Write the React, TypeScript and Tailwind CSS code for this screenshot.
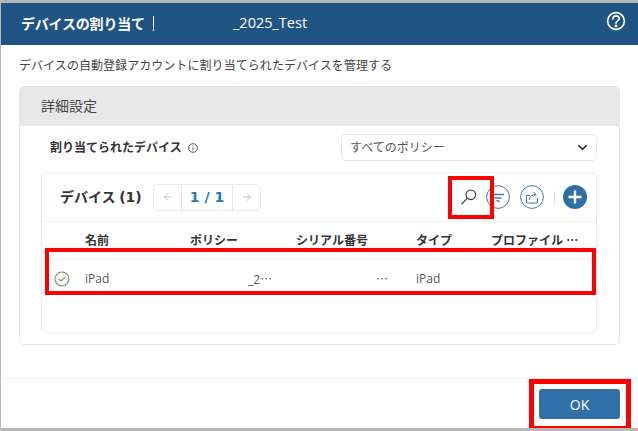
import { ArrowLeft, ArrowRight, ChevronDown } from "lucide-react";

function Dots() {
  return <span className="font-['Noto_Sans_CJK_JP']">…</span>;
}

const columns = [
  { label: "名前", width: "w-[105px]" },
  { label: "ポリシー", width: "w-[106px]" },
  { label: "シリアル番号", width: "w-[120px]" },
  { label: "タイプ", width: "w-[75px]" },
];

function HelpIcon() {
  return (
    <svg width="20" height="20" viewBox="0 0 20 20" fill="none" stroke="white" strokeWidth="1.6">
      <circle cx="10" cy="10" r="8.4" />
      <path d="M6.9 7.9c0-1.8 1.4-3 3.2-3s3.1 1.1 3.1 2.7c0 2.4-3.2 2.2-3.2 4.6" strokeLinecap="round" />
      <circle cx="10" cy="15" r="0.6" fill="white" />
    </svg>
  );
}

function InfoIcon() {
  return (
    <svg width="10" height="10" viewBox="0 0 10 10" fill="none" stroke="#444" strokeWidth="0.9">
      <circle cx="5" cy="5" r="4.3" />
      <path d="M5 4.4v3M5 2.5v1" />
    </svg>
  );
}

function SearchIcon() {
  return (
    <svg width="18" height="18" viewBox="0 0 18 18" fill="none" stroke="#333" strokeWidth="1.1">
      <circle cx="10.8" cy="6.8" r="4.8" />
      <path d="M7.2 10.4L1.8 15.8" strokeLinecap="round" />
    </svg>
  );
}

function FilterIcon() {
  return (
    <svg width="24" height="24" viewBox="0 0 24 24" fill="none" stroke="#3a78ad" strokeWidth="1">
      <circle cx="12" cy="12" r="11.4" />
      <path d="M6 9.500h12" strokeWidth="1.500" />
      <path d="M8.500 13h7" strokeWidth="1.500" />
      <path d="M10.500 16h3" strokeWidth="1.500" />
    </svg>
  );
}

function ExportIcon() {
  return (
    <svg width="24" height="24" viewBox="0 0 24 24" fill="none" stroke="#3a78ad" strokeWidth="1">
      <circle cx="12" cy="12" r="11.4" />
      <path d="M10 10.500H6.500v7.500h11v-5" />
      <path d="M9.500 15c0-3.500 2.500-5.500 6-5.500M13.500 7l2.500 2.500-2.500 2.200" />
    </svg>
  );
}

function PlusIcon() {
  return (
    <svg width="24" height="24" viewBox="0 0 24 24">
      <circle cx="12" cy="12" r="12" fill="#2f6fa6" />
      <path d="M12 5.500v13M5.500 12h13" stroke="white" strokeWidth="2.400" />
    </svg>
  );
}

function CheckIcon() {
  return (
    <svg width="16" height="16" viewBox="0 0 16 16" fill="none" stroke="#5f9a58" strokeWidth="1.100">
      <circle cx="8" cy="8" r="7" />
      <path d="M4.800 8l2.200 2 4.200-3.800" />
    </svg>
  );
}

export default function App() {
  return (
    <div
      className="relative flex h-[431px] w-[638px] flex-col overflow-hidden border-t-[3px] border-b-[3px] border-l border-[#b8b8b8] bg-white text-[#333]"
      style={{ fontFamily: '"Open Sans", "Noto Sans CJK JP", sans-serif' }}
    >
      {/* Title bar */}
      <div className="flex h-[42px] shrink-0 items-center bg-[#1f5484] pb-[2px] pl-5 pr-[12px] text-white">
        <span className="w-[132px] whitespace-nowrap text-[14px] font-bold tracking-[-0.2px]">デバイスの割り当て</span>
        <span className="h-[15px] w-px bg-white" />
        <span className="ml-[79px] text-[14.5px]">_2025_Test</span>
        <span className="mb-[4px] ml-auto flex">
          <HelpIcon />
        </span>
      </div>

      <div className="flex-1 px-[18px] pt-[11px]">
        <p className="h-[19px] text-[12px] leading-[19px] tracking-[0.06px] text-[#444]">
          デバイスの自動登録アカウントに割り当てられたデバイスを管理する
        </p>

        {/* Settings card */}
        <div className="mt-[11px] h-[259px] w-[601px] overflow-hidden rounded-[5px] border border-[#e6e6e6]">
          <div className="-mx-px -mt-px flex h-[40px] items-center bg-[#e8e8e8] pb-[2px] pl-[22px] text-[14px] text-[#444]">
            詳細設定
          </div>

          <div className="pl-[21px] pr-[22px]">
            <div className="mt-[8px] flex h-[27px] items-center pl-[9px]">
              <span className="text-[12px] font-bold">割り当てられたデバイス</span>
              <span className="ml-[6px] flex">
                <InfoIcon />
              </span>
              <div className="ml-auto flex h-[27px] w-[256px] items-center justify-between rounded-[5px] border border-[#e6e6e6] pl-[8px] pr-[6px] text-[12px] text-[#555]">
                <span>すべてのポリシー</span>
                <ChevronDown size={15} strokeWidth={2.5} color="#333" />
              </div>
            </div>

            {/* Devices table */}
            <div className="mt-[11px] h-[161px] rounded-[5px] border border-[#ececec]">
              <div className="flex h-[49px] items-center border-b border-[#f0f0f0] pl-[18px] pr-[9px]">
                <span className="w-[93px] whitespace-nowrap text-[14px] font-bold">
                  デバイス <span className="font-['DejaVu_Sans']">(1)</span>
                </span>
                <div className="flex h-[27px] w-[108px] items-center rounded-[5px] border border-[#e8e8e8] text-[#c4c4c4]">
                  <span className="flex h-full w-[28px] items-center justify-center border-r border-[#e8e8e8]">
                    <ArrowLeft size={12} />
                  </span>
                  <span className="flex h-full w-[51px] items-center justify-center border-r border-[#e8e8e8] font-['DejaVu_Sans'] text-[14px] font-bold text-[#1f7ab0]">
                    1 / 1
                  </span>
                  <span className="flex flex-1 items-center justify-center">
                    <ArrowRight size={12} />
                  </span>
                </div>
                <div className="ml-auto flex items-center">
                  <SearchIcon />
                  <span className="ml-[8px] flex">
                    <FilterIcon />
                  </span>
                  <span className="ml-[10px] flex">
                    <ExportIcon />
                  </span>
                  <span className="ml-[10px] h-[13px] w-px bg-[#ddd]" />
                  <span className="ml-[8px] flex">
                    <PlusIcon />
                  </span>
                </div>
              </div>

              <div className="flex h-[38px] items-center border-b border-[#ececec] pl-[43px] text-[12px] font-bold">
                {columns.map((c) => (
                  <span key={c.label} className={`${c.width} whitespace-nowrap`}>
                    {c.label}
                  </span>
                ))}
                <span className="whitespace-nowrap">
                  プロファイル <Dots />
                </span>
              </div>

              <div className="flex h-[38px] items-center pl-[12px] text-[12px] text-[#555]">
                <span className="flex w-[31px]">
                  <CheckIcon />
                </span>
                <span className="w-[163px]">iPad</span>
                <span className="w-[128px]">
                  _2
                  <Dots />
                </span>
                <span className="w-[40px]">
                  <Dots />
                </span>
                <span>iPad</span>
              </div>
            </div>
          </div>
        </div>
      </div>

      {/* Footer */}
      <div className="flex h-[50px] shrink-0 items-center justify-end border-t border-[#eeeeee] pr-[18px]">
        <button className="mt-[1px] h-[30px] w-[81px] rounded-[3px] bg-[#3070a6] text-[14px] text-white">OK</button>
      </div>

      {/* Red annotation boxes */}
      <div className="absolute left-[447px] top-[173px] h-[43px] w-[46px] border-[4px] border-[#ff0000]" />
      <div className="absolute left-[44px] top-[245px] h-[47px] w-[551px] border-[4px] border-[#ff0000]" />
      <div className="absolute left-[528px] top-[376px] h-[52px] w-[102px] border-[5px] border-[#ff0000]" />
    </div>
  );
}
